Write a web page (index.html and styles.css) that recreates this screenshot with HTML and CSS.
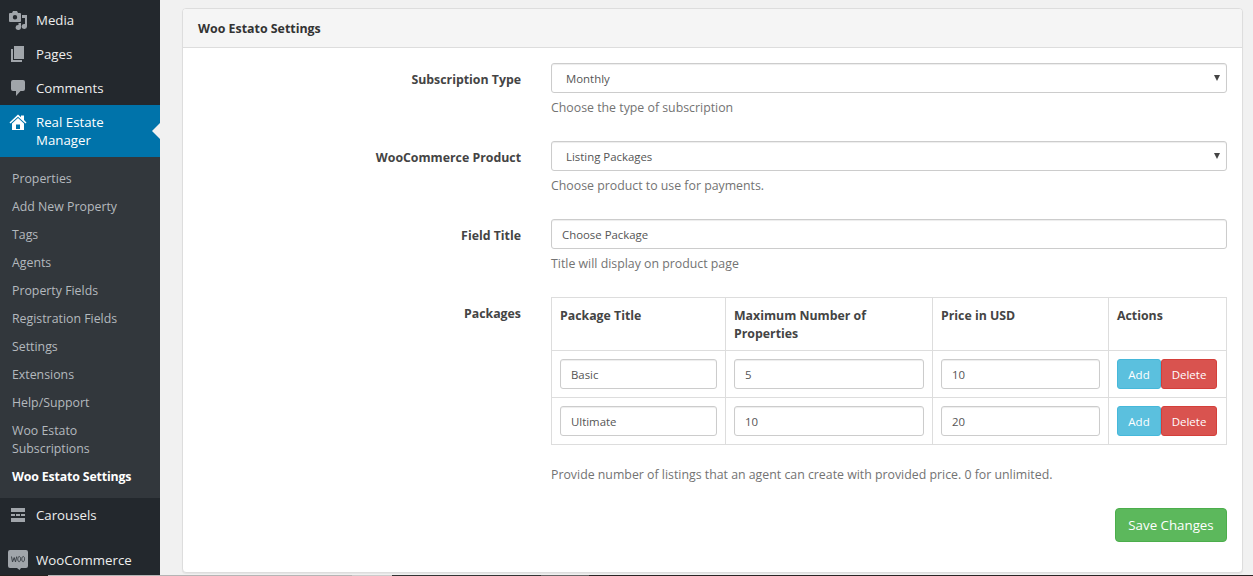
FILE: index.html
```html
<!DOCTYPE html>
<html lang="en">
<head>
<meta charset="utf-8">
<title>Woo Estato Settings</title>
<link rel="stylesheet" href="styles.css">
</head>
<body>
<div class="screen">
<nav class="sidebar">
  <a class="item"><svg class="icon" viewBox="0 0 20 20"><path fill-rule="evenodd" d="M4 3l1-2h4l1 2h2q1 0 1 1v7q0 1-1 1H2q-1 0-1-1V4q0-1 1-1zM7 5a2.200 2.200 0 1 0 0 4.400a2.200 2.200 0 0 0 0-4.400z"/><path d="M14 5h5v11.500a2.700 2.500 0 1 1-2-2.400V8h-3zM10.500 13H13v4.500a2.700 2.500 0 1 1-2.500-2.500z"/></svg><span>Media</span></a>
  <a class="item"><svg class="icon" viewBox="0 0 20 20"><path d="M6 2h10v13H6zM3 5h2v11h9v2H3z"/></svg><span>Pages</span></a>
  <a class="item"><svg class="icon" viewBox="0 0 20 20"><path d="M5 2h10q2 0 2 2v7q0 2-2 2h-2.500L8 18v-5H5q-2 0-2-2V4q0-2 2-2z"/></svg><span>Comments</span></a>
  <a class="item current"><svg class="icon home" viewBox="0 0 20 20"><path d="M10 1.500l3 2.700V2.500h3V7l2.500 2.500-1 1L10 3.700l-7.500 6.800-1-1z"/><path fill-rule="evenodd" d="M10 5l6 5.500V17H4v-6.500zM8 11.500V16h4v-4.500z"/></svg><span>Real Estate<br>Manager</span></a>
  <div class="submenu">
    <a>Properties</a><a>Add New Property</a><a>Tags</a><a>Agents</a><a>Property Fields</a><a>Registration Fields</a><a>Settings</a><a>Extensions</a><a>Help/Support</a><a>Woo Estato<br>Subscriptions</a><a class="active">Woo Estato Settings</a>
  </div>
  <a class="item"><svg class="icon" viewBox="0 0 20 20"><path d="M3 3h14v4H3zM3 9h4v2H3zM8 9h4v2H8zM13 9h4v2h-4zM3 13h14v4H3z"/></svg><span>Carousels</span></a>
  <a class="item woo"><svg class="icon" viewBox="0 0 20 20"><path d="M2 0h16q2 0 2 2v14q0 2-2 2h-5l-1.500 2L9 18H2q-2 0-2-2V2q0-2 2-2z"/><path class="woo-mark" d="M3.500 6.500l1 5.500 1.700-4.500L7.500 12l1.200-5.500M11.300 6.500c-2 0-2 5.200-.2 5.200s2-5.200.2-5.200zM15.300 6.500c-2 0-2 5.200-.2 5.200s2-5.200.2-5.200z"/></svg><span>WooCommerce</span></a>
</nav>
<main class="content">
  <section class="panel">
    <h1 class="panel-head">Woo Estato Settings</h1>
    <form class="form">
      <div class="row"><label>Subscription Type</label><div class="field">
        <div class="input select">Monthly<svg class="arrow" viewBox="0 0 6 6"><path d="M0 0h6L3 6z"/></svg></div><p class="help">Choose the type of subscription</p></div></div>
      <div class="row"><label>WooCommerce Product</label><div class="field">
        <div class="input select">Listing Packages<svg class="arrow" viewBox="0 0 6 6"><path d="M0 0h6L3 6z"/></svg></div><p class="help">Choose product to use for payments.</p></div></div>
      <div class="row"><label>Field Title</label><div class="field">
        <div class="input">Choose Package</div><p class="help">Title will display on product page</p></div></div>
      <div class="row"><label>Packages</label><div class="field">
        <table class="packages">
          <colgroup><col class="c1"><col class="c2"><col class="c3"><col class="c4"></colgroup>
          <tr class="head"><th>Package Title</th><th>Maximum Number of<br>Properties</th><th>Price in USD</th><th>Actions</th></tr>
          <tr><td><div class="input">Basic</div></td><td><div class="input">5</div></td><td><div class="input">10</div></td><td><div class="actions"><span class="btn add">Add</span><span class="btn delete">Delete</span></div></td></tr>
          <tr><td><div class="input">Ultimate</div></td><td><div class="input">10</div></td><td><div class="input">20</div></td><td><div class="actions"><span class="btn add">Add</span><span class="btn delete">Delete</span></div></td></tr>
        </table>
        <p class="help note">Provide number of listings that an agent can create with provided price. 0 for unlimited.</p></div></div>
      <div class="submit"><span class="btn save">Save Changes</span></div>
    </form>
  </section>
</main>
<div class="edge"></div>
</div>
</body>
</html>
```

FILE: styles.css
```css
* { box-sizing: border-box; }
body { margin: 0; background: #f1f1f1; color: #444; font: 12.33px/18px "Open Sans", "Noto Sans", sans-serif; }
.screen { position: relative; display: flex; height: 576px; overflow: hidden; }
.sidebar { width: 160px; flex: none; padding-top: 3px; background: #23282d; }
.item { display: flex; gap: 8px; padding: 8px 0 8px 8px; color: #eee; font-size: 13.25px; line-height: 18px; white-space: nowrap; }
.icon { width: 20px; height: 20px; flex: none; margin: -1px 0; fill: #a0a5aa; }
.current { position: relative; background: #0073aa; color: #fff; }
.current .icon { fill: #fff; }
.icon.home { margin: 0 0 -2px; }
.current::after { content: ""; position: absolute; right: 0; top: 18px; border: 8px solid transparent; border-right-color: #f1f1f1; border-left: 0; }
.submenu { display: flex; flex-direction: column; padding: 8px 0 7px; background: #32373c; }
.submenu a { padding: 5px 12px; color: #b4b9be; white-space: nowrap; }
.submenu .active { color: #fff; font-weight: 700; letter-spacing: -.15px; }
.woo { margin-top: 11px; }
.woo-mark { fill: none; stroke: #3c4248; stroke-width: 1; }
.content { flex: 1; padding: 8px 10px 0 22px; }
.panel { height: 565px; background: #fff; border: 1px solid #ddd; border-radius: 4px; box-shadow: 0 1px 1px rgba(0,0,0,.05); }
.panel-head { margin: 0; padding: 11px 15px 9px; height: 39px; border-bottom: 1px solid #ddd; border-radius: 3px 3px 0 0; background: #f5f5f5; color: #333; font-size: 12.4px; line-height: 18px; font-weight: 700; }
.form { padding: 15px; }
.row { display: grid; grid-template-columns: 323px 676px; column-gap: 30px; margin-bottom: 15px; }
.row label { padding-top: 8px; text-align: right; font-weight: 700; }
.input { height: 30px; padding: 5px 10px; border: 1px solid #ccc; border-radius: 3px; background: #fff; box-shadow: inset 0 1px 1px rgba(0,0,0,.075); color: #555; font-size: 11.4px; line-height: 19px; white-space: nowrap; }
.select { display: flex; justify-content: space-between; padding: 5px 6px 5px 14px; }
.arrow { width: 6px; height: 6px; margin-top: 6px; fill: #444; }
.help { margin: 6px 0 9px; height: 18px; color: #737373; }
.packages { width: 676px; table-layout: fixed; border-collapse: collapse; margin: 0 0 21px; }
.packages th, .packages td { padding: 8px; border: 1px solid #ddd; text-align: left; vertical-align: top; }
.packages th { height: 53px; padding: 9px 8px 7px; white-space: nowrap; }
.c1 { width: 174px; } .c2 { width: 207px; } .c3 { width: 176px; } .c4 { width: 118px; }
.actions { display: flex; }
.btn { border: 1px solid; border-radius: 3px; color: #fff; text-align: center; white-space: nowrap; }
.add, .delete { height: 30px; font-size: 11.5px; line-height: 29px; }
.add { width: 44px; background: #5bc0de; border-color: #46b8da; }
.delete { width: 56px; background: #d9534f; border-color: #d43f3a; }
.submit { display: flex; justify-content: flex-end; }
.save { width: 112px; height: 34px; border-radius: 4px; background: #5cb85c; border-color: #4cae4c; font-size: 13.3px; line-height: 33px; }
.edge { position: absolute; left: 0; right: 0; bottom: 0; height: 1px; background: linear-gradient(90deg, #25221f 48px, #b5b5b5 48px 352px, #ccc 352px 392px, #333 392px 541px, #666 541px 589px, #2a2424 589px); }
```
